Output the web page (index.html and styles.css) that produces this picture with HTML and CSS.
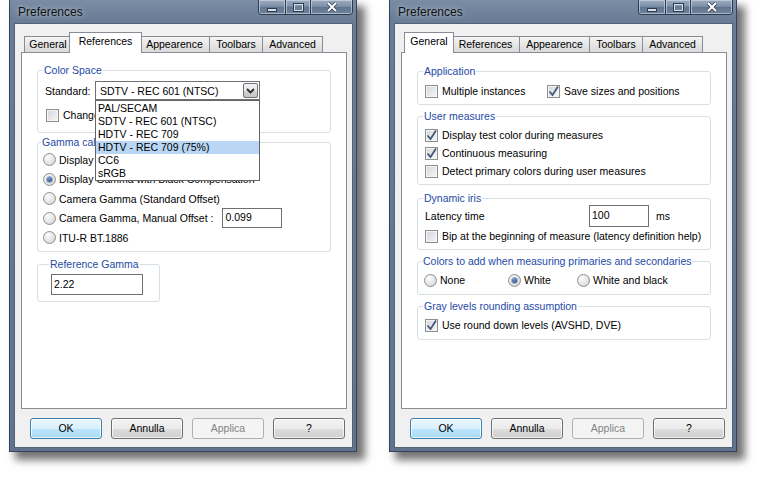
FILE: index.html
```html
<!DOCTYPE html>
<html>
<head>
    <meta charset="utf-8">
    <title>Preferences</title>
    <link rel="stylesheet" href="styles.css">
</head>
<body>
    <!-- finestra 1: scheda References con la combo aperta -->
    <div class="window">
        <div class="titlebar">
            <span class="title">Preferences</span>
            <div class="caption">
                <span class="cbtn cbtn-min"><svg width="10" height="4" viewBox="0 0 10 4"><rect x="0.5" y="0.5" width="9" height="3" fill="#d8dee6" stroke="#2f3b4c" stroke-width="1"/></svg></span>
                <span class="cbtn cbtn-max"><svg width="11" height="9" viewBox="0 0 11 9"><rect x="0.5" y="0.5" width="10" height="8" fill="none" stroke="#2f3b4c"/><rect x="1.5" y="1.5" width="8" height="6" fill="none" stroke="#d8dee6"/><rect x="2.5" y="3" width="6" height="4" fill="#6c7f97"/></svg></span>
                <span class="cbtn cbtn-close"><svg width="12" height="10" viewBox="0 0 12 10"><path d="M2 1 L10 9 M10 1 L2 9" stroke="#2f3b4c" stroke-width="3.4"/><path d="M2 1 L10 9 M10 1 L2 9" stroke="#fff" stroke-width="2"/></svg></span>
            </div>
        </div>
        <div class="client">
            <div class="tabs">
                <span class="tab t-gen">General</span>
                <span class="tab t-ref active">References</span>
                <span class="tab t-app">Appearence</span>
                <span class="tab t-tool">Toolbars</span>
                <span class="tab t-adv">Advanced</span>
            </div>
            <div class="panel panel-refs">
                <fieldset class="group gs-color">
                    <legend>Color Space</legend>
                    <div class="row row-combo">
                        <span class="lbl">Standard:</span>
                        <div class="combo">
                            <span class="combo-text">SDTV - REC 601 (NTSC)</span>
                            <span class="combo-btn"><svg width="9" height="6" viewBox="0 0 9 6"><path d="M1 1 L4.5 4.5 L8 1" fill="none" stroke="#2b2b2b" stroke-width="1.8"/></svg></span>
                            <ul class="combo-list">
                                <li>PAL/SECAM</li>
                                <li>SDTV - REC 601 (NTSC)</li>
                                <li>HDTV - REC 709</li>
                                <li class="hover">HDTV - REC 709 (75%)</li>
                                <li>CC6</li>
                                <li>sRGB</li>
                            </ul>
                        </div>
                    </div>
                    <div class="row row-change"><span class="box"></span>Change color space</div>
                </fieldset>
                <fieldset class="group gs-gamma">
                    <legend>Gamma calibration</legend>
                    <div class="row rrow"><span class="radio"></span>Display Gamma</div>
                    <div class="row rrow"><span class="radio on"></span>Display Gamma with Black Compensation</div>
                    <div class="row rrow"><span class="radio"></span>Camera Gamma (Standard Offset)</div>
                    <div class="row rrow"><span class="radio"></span>Camera Gamma, Manual Offset :<span class="edit edit-offset">0.099</span></div>
                    <div class="row rrow"><span class="radio"></span>ITU-R BT.1886</div>
                </fieldset>
                <fieldset class="group gs-refgamma">
                    <legend>Reference Gamma</legend>
                    <span class="edit edit-gamma">2.22</span>
                </fieldset>
            </div>
            <div class="buttons">
                <span class="btn btn-default">OK</span>
                <span class="btn">Annulla</span>
                <span class="btn btn-disabled">Applica</span>
                <span class="btn">?</span>
            </div>
        </div>
    </div>

    <!-- finestra 2: scheda General -->
    <div class="window">
        <div class="titlebar">
            <span class="title">Preferences</span>
            <div class="caption">
                <span class="cbtn cbtn-min"><svg width="10" height="4" viewBox="0 0 10 4"><rect x="0.5" y="0.5" width="9" height="3" fill="#d8dee6" stroke="#2f3b4c" stroke-width="1"/></svg></span>
                <span class="cbtn cbtn-max"><svg width="11" height="9" viewBox="0 0 11 9"><rect x="0.5" y="0.5" width="10" height="8" fill="none" stroke="#2f3b4c"/><rect x="1.5" y="1.5" width="8" height="6" fill="none" stroke="#d8dee6"/><rect x="2.5" y="3" width="6" height="4" fill="#6c7f97"/></svg></span>
                <span class="cbtn cbtn-close"><svg width="12" height="10" viewBox="0 0 12 10"><path d="M2 1 L10 9 M10 1 L2 9" stroke="#2f3b4c" stroke-width="3.4"/><path d="M2 1 L10 9 M10 1 L2 9" stroke="#fff" stroke-width="2"/></svg></span>
            </div>
        </div>
        <div class="client">
            <div class="tabs">
                <span class="tab t-gen active">General</span>
                <span class="tab t-ref">References</span>
                <span class="tab t-app">Appearence</span>
                <span class="tab t-tool">Toolbars</span>
                <span class="tab t-adv">Advanced</span>
            </div>
            <div class="panel panel-general">
                <fieldset class="group gs-app">
                    <legend>Application</legend>
                    <div class="row">
                        <span class="item item-multi"><span class="box"></span>Multiple instances</span>
                        <span class="item"><span class="box checked"><svg width="11" height="11" viewBox="0 0 11 11"><path d="M1.5 5.5 L4.5 9 L10 0.5" fill="none" stroke="#46587a" stroke-width="1.8"/></svg></span>Save sizes and positions</span>
                    </div>
                </fieldset>
                <fieldset class="group gs-user">
                    <legend>User measures</legend>
                    <div class="row"><span class="box checked"><svg width="11" height="11" viewBox="0 0 11 11"><path d="M1.5 5.5 L4.5 9 L10 0.5" fill="none" stroke="#46587a" stroke-width="1.8"/></svg></span>Display test color during measures</div>
                    <div class="row"><span class="box checked"><svg width="11" height="11" viewBox="0 0 11 11"><path d="M1.5 5.5 L4.5 9 L10 0.5" fill="none" stroke="#46587a" stroke-width="1.8"/></svg></span>Continuous measuring</div>
                    <div class="row"><span class="box"></span>Detect primary colors during user measures</div>
                </fieldset>
                <fieldset class="group gs-iris">
                    <legend>Dynamic iris</legend>
                    <div class="row row-latency">
                        <span class="lbl-latency">Latency time</span>
                        <span class="edit edit-latency">100</span>
                        <span class="unit">ms</span>
                    </div>
                    <div class="row"><span class="box"></span>Bip at the beginning of measure (latency definition help)</div>
                </fieldset>
                <fieldset class="group gs-colors">
                    <legend>Colors to add when measuring primaries and secondaries</legend>
                    <div class="row">
                        <span class="item item-none"><span class="radio"></span>None</span>
                        <span class="item item-white"><span class="radio on"></span>White</span>
                        <span class="item"><span class="radio"></span>White and black</span>
                    </div>
                </fieldset>
                <fieldset class="group gs-gray">
                    <legend>Gray levels rounding assumption</legend>
                    <div class="row"><span class="box checked"><svg width="11" height="11" viewBox="0 0 11 11"><path d="M1.5 5.5 L4.5 9 L10 0.5" fill="none" stroke="#46587a" stroke-width="1.8"/></svg></span>Use round down levels (AVSHD, DVE)</div>
                </fieldset>
            </div>
            <div class="buttons">
                <span class="btn btn-default">OK</span>
                <span class="btn">Annulla</span>
                <span class="btn btn-disabled">Applica</span>
                <span class="btn">?</span>
            </div>
        </div>
    </div>
</body>
</html>
```

FILE: styles.css
```css
* {
    box-sizing: border-box;
}

body {
    margin: 0;
    padding-left: 9px;
    background: #fff;
    font-family: "Liberation Sans", Arial, sans-serif;
    font-size: 10.5px;
    color: #000;
    display: flex;
    align-items: flex-start;
    gap: 32px;
    height: 480px;
    overflow: hidden;
}

/* cornice della finestra */
.window {
    width: 348px;
    padding: 0 3px 3px 4px;
    background: linear-gradient(#7a8da5, #687c95 22px, #60748d);
    border: 1px solid #34425a;
    border-top: none;
    box-shadow: 7px 7px 8px 1px rgba(0, 0, 0, 0.55);
    display: flex;
    flex-direction: column;
}

.titlebar {
    height: 23px;
    display: flex;
    align-items: flex-start;
    padding-left: 4px;
}

.title {
    font-size: 12px;
    line-height: 25px;
    color: #111;
    text-shadow: 0 0 5px rgba(255, 255, 255, 0.7);
}

.caption {
    margin-left: auto;
    display: flex;
    height: 15px;
    border: 1px solid #2f3b4c;
    border-top: none;
    border-radius: 0 0 4px 4px;
    overflow: hidden;
}

.cbtn {
    display: flex;
    align-items: center;
    justify-content: center;
    height: 100%;
    background: linear-gradient(#9aabbf, #7f92aa 45%, #62768f 50%, #6e829b);
    box-shadow: inset 0 0 0 1px rgba(220, 228, 238, 0.55);
}

.cbtn + .cbtn {
    border-left: 1px solid #2f3b4c;
}

.cbtn-min {
    width: 26px;
    padding-top: 5px;
}

.cbtn-max {
    width: 25px;
}

.cbtn-close {
    width: 42px;
}

/* area client */
.client {
    background: #f0f0f0;
    border: 1px solid #52627a;
    padding: 8px 5px 8px 6px;
}

.tabs {
    display: flex;
    align-items: flex-end;
    height: 20px;
    padding-left: 3px;
}

.tab {
    height: 16px;
    line-height: 14px;
    text-align: center;
    border: 1px solid #898c95;
    border-bottom: none;
    background: linear-gradient(#f4f4f4, #e6e6e6 50%, #dadada);
    margin-left: -1px;
}

.t-gen {
    width: 48px;
    margin-left: 0;
}

.t-ref {
    width: 69px;
}

.t-app {
    width: 71px;
}

.t-tool {
    width: 54px;
}

.t-adv {
    width: 61px;
}

/* la scheda attiva si allarga di 2px per lato */
.tab.active {
    position: relative;
    z-index: 1;
    height: 21px;
    margin: 0 -2px -1px -3px;
    padding-top: 1px;
    background: #fff;
}

.t-ref.active {
    width: 73px;
}

.t-gen.active {
    width: 50px;
    margin-left: 0;
}

.panel {
    height: 357px;
    background: #fff;
    border: 1px solid #898c95;
    padding: 11px 15px 0;
}

.panel-general {
    padding-top: 12px;
}

/* group box */
.group {
    margin: 0;
    min-width: 0;
    border: 1px solid #d5dfe5;
    border-radius: 3px;
    padding: 0 0 4px 7px;
}

.group legend {
    color: #1e4aa6;
    line-height: 13px;
    padding: 0 1px;
    margin-left: -2px;
}

.row {
    display: flex;
    align-items: center;
    height: 18px;
    white-space: nowrap;
}

.box {
    width: 13px;
    height: 13px;
    flex: none;
    margin-right: 4px;
    border: 1px solid #8e8f8f;
    background: linear-gradient(135deg, #d2d5da, #f7f7f7);
    box-shadow: inset 0 0 0 1px #f4f4f4;
    display: flex;
    align-items: center;
    justify-content: center;
}

.radio {
    width: 13px;
    height: 13px;
    flex: none;
    margin-right: 3px;
    border-radius: 50%;
    border: 1px solid #8e8f8f;
    background: radial-gradient(circle at 35% 30%, #fdfdfd, #dcdde0 70%, #c9cbcf);
    display: flex;
    align-items: center;
    justify-content: center;
}

.radio.on::after {
    content: "";
    width: 5px;
    height: 5px;
    border-radius: 50%;
    background: radial-gradient(circle at 40% 35%, #7f9ad0, #1d3566);
    box-shadow: 0 0 0 1px #9fb2d6;
}

.edit {
    display: block;
    background: #fff;
    border: 1px solid #6f6f6f;
    padding-left: 2px;
}

/* scheda References */
.gs-color {
    padding: 4px 0 8px 7px;
    position: relative;
    z-index: 2;
}

.row-combo {
    height: 19px;
}

.lbl {
    width: 50px;
}

.combo {
    position: relative;
    width: 165px;
    height: 19px;
    border: 1px solid #707070;
    background: #fff;
    display: flex;
    align-items: center;
    padding-left: 4px;
}

.combo-btn {
    margin-left: auto;
    margin-right: 1px;
    width: 15px;
    height: 15px;
    border: 1px solid #6d7480;
    border-radius: 2px;
    background: linear-gradient(#f3f3f3, #e6e6e6 50%, #d2d2d2 50%, #c6c6c6);
    display: flex;
    align-items: center;
    justify-content: center;
}

.combo-list {
    position: absolute;
    top: 18px;
    left: -1px;
    width: 165px;
    margin: 0;
    padding: 1px 0 0;
    list-style: none;
    background: #fff;
    border: 1px solid #646464;
}

.combo-list li {
    height: 13px;
    line-height: 13px;
    padding-left: 2px;
}

.combo-list li.hover {
    background: #b9d7f4;
}

.row-change {
    margin-top: 6px;
    padding-left: 1px;
}

.gs-gamma {
    margin-top: 3px;
    padding: 1px 0 3px 5px;
}

.rrow {
    height: 19.5px;
}

.edit-offset {
    width: 60px;
    height: 20px;
    line-height: 16px;
    margin-left: 9px;
}

.gs-refgamma {
    margin-top: 6px;
    width: 123px;
    padding: 3px 0 6px 13px;
}

.edit-gamma {
    width: 92px;
    height: 21px;
    line-height: 19px;
}

/* scheda General */
.gs-app {
    padding-top: 4px;
}

.item {
    display: flex;
    align-items: center;
}

.item-multi {
    width: 122px;
}

.gs-user {
    margin-top: 5px;
    padding-top: 3px;
}

.gs-iris {
    margin-top: 7px;
}

.row-latency {
    height: 22px;
}

.lbl-latency {
    width: 164px;
}

.edit-latency {
    width: 60px;
    height: 22px;
    line-height: 18px;
}

.unit {
    margin-left: 7px;
}

.gs-colors {
    margin-top: 5px;
    padding: 3px 0 5px 6px;
}

.item-none {
    width: 84px;
}

.item-white {
    width: 69px;
}

.gs-gray {
    margin-top: 5px;
    padding: 3px 0 5px 7px;
}

/* pulsanti */
.buttons {
    display: flex;
    gap: 9px;
    margin-top: 9px;
    padding-left: 9px;
}

.btn {
    width: 72px;
    height: 21px;
    line-height: 19px;
    text-align: center;
    border: 1px solid #707070;
    border-radius: 3px;
    background: linear-gradient(#f2f2f2, #ebebeb 50%, #dddddd 50%, #cfcfcf);
    box-shadow: inset 0 0 0 1px rgba(255, 255, 255, 0.7);
}

.btn-default {
    border-color: #3c7fb1;
    background: linear-gradient(#eaf6fd, #d9f0fc 50%, #bee6fd 50%, #a7d9f5);
}

.btn-disabled {
    border-color: #adb2b5;
    background: #f4f4f4;
    color: #838383;
    box-shadow: none;
}
```
